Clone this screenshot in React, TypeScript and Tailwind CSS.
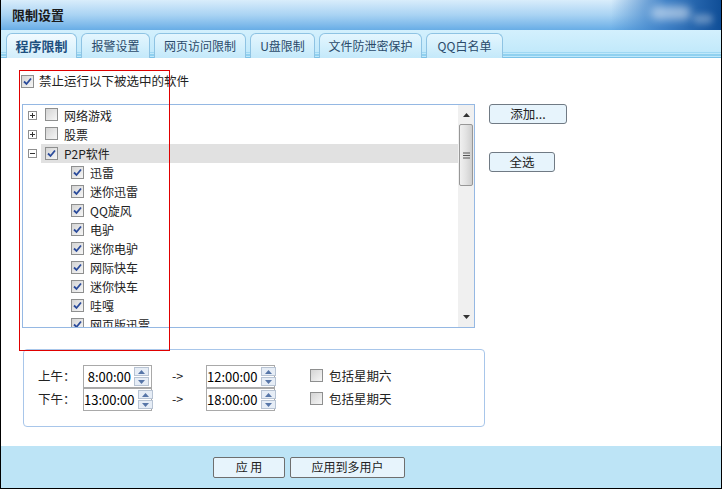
import React from 'react';

const font = { fontFamily: '"Microsoft YaHei", "Noto Sans CJK SC", "Liberation Sans", sans-serif' };

function Check({ checked = false }: { checked?: boolean }) {
  return (
    <span className="inline-flex h-[13px] w-[13px] shrink-0 items-center justify-center border border-[#8e8f8f] bg-gradient-to-br from-[#d4d4d4] to-[#f6f6f6]">
      {checked && (
        <svg width="9" height="9" viewBox="0 0 9 9">
          <path d="M1 4.5 L3.5 7 L8 1.5" fill="none" stroke="#2b4b9b" strokeWidth="1.8" />
        </svg>
      )}
    </span>
  );
}

function Expander({ open = false }: { open?: boolean }) {
  return (
    <span className="relative inline-block h-[9px] w-[9px] shrink-0 border border-[#8f8f8f] bg-white">
      <span className="absolute left-[1px] top-[3px] h-[1px] w-[5px] bg-[#333]" />
      {!open && <span className="absolute left-[3px] top-[1px] h-[5px] w-[1px] bg-[#333]" />}
    </span>
  );
}

function Spinner({ value }: { value: string }) {
  return (
    <div className="flex h-[23px] w-[69px] items-center border border-[#a9a9a9] bg-white">
      <span className="flex-1 pr-[3px] text-right text-[13px] text-black">{value}</span>
      <div className="mr-[2px] flex flex-col gap-[1px]">
        <span className="flex h-[9px] w-[15px] items-center justify-center border border-[#b7c3d3] bg-[#e6edf6]">
          <svg width="7" height="4" viewBox="0 0 7 4"><path d="M0 4 L3.5 0 L7 4Z" fill="#5776a8" /></svg>
        </span>
        <span className="flex h-[9px] w-[15px] items-center justify-center border border-[#b7c3d3] bg-[#e6edf6]">
          <svg width="7" height="4" viewBox="0 0 7 4"><path d="M0 0 L3.5 4 L7 0Z" fill="#5776a8" /></svg>
        </span>
      </div>
    </div>
  );
}

const tabs = ['程序限制', '报警设置', '网页访问限制', 'U盘限制', '文件防泄密保护', 'QQ白名单'];
const tabWidths = ['w-[71px]', 'w-[69px]', 'w-[92px]', 'w-[65px]', 'w-[103px]', 'w-[77px]'];

const children = ['迅雷', '迷你迅雷', 'QQ旋风', '电驴', '迷你电驴', '网际快车', '迷你快车', '哇嘎', '网页版迅雷'];

export default function App() {
  return (
    <div style={font} className="relative flex h-[489px] w-[722px] flex-col border-x border-b border-black bg-white text-[12px] text-[#222]">
      {/* title bar */}
      <div className="relative flex h-[30px] items-center overflow-hidden bg-gradient-to-b from-[#d9edfb] via-[#a9d3f3] to-[#68ade6] pl-[11px]">
        <span className="text-[13px] font-bold text-[#1a1a1a]">限制设置</span>
        <div className="absolute right-0 top-0 h-[30px] w-[110px] bg-gradient-to-r from-transparent via-[#3c7fc6] to-[#0f4e97]" />
        <div className="absolute right-[30px] top-[6px] h-[14px] w-[40px] rounded-full bg-white/50 blur-[4px]" />
        <div className="absolute right-[8px] top-[14px] h-[10px] w-[20px] rounded-full bg-white/30 blur-[3px]" />
      </div>

      {/* tabs strip */}
      <div className="relative flex h-[28px] items-end gap-[4px] bg-gradient-to-b from-[#d3f0fd] to-[#bde7fa] pl-[5px]">
        <div className="absolute bottom-[5px] left-0 right-0 h-[1px] bg-[#9fd8f3]" />
        <div className="absolute bottom-[2px] left-0 right-0 h-[2px] bg-[#90d1f0]" />
        <div className="absolute bottom-0 left-0 right-0 h-[1px] bg-[#7cc3e8]" />
        {tabs.map((t, i) => (
          <div
            key={t}
            className={`relative z-10 flex h-[25px] items-center justify-center rounded-t-[6px] border border-b-0 border-[#8ec3e3] ${tabWidths[i]} ${
              i === 0
                ? 'bg-gradient-to-b from-[#f2fbff] to-[#d2eefb] text-[13px] font-bold text-[#1d4f7f]'
                : 'bg-gradient-to-b from-[#e4f6fe] to-[#c4e9fa] text-[12px] text-[#2a4a6a]'
            }`}
          >
            {t}
          </div>
        ))}
      </div>

      {/* content */}
      <div className="relative flex flex-1 flex-col bg-white">
        <div className="flex h-[30px] items-end gap-[5px] pl-[20px]">
          <Check checked />
          <span className="leading-[14px] text-[12.5px]">禁止运行以下被选中的软件</span>
        </div>

        <div className="mt-[16px] flex gap-[14px] pl-[21px]">
          <div className="flex h-[224px] w-[453px] border border-[#95b8e3] bg-white">
            <div className="flex flex-1 flex-col overflow-hidden pt-[1px]">
              {['网络游戏', '股票'].map((g) => (
                <div key={g} className="flex h-[19px] shrink-0 items-center pl-[5px]">
                  <Expander />
                  <span className="ml-[8px]"><Check /></span>
                  <span className="ml-[6px]">{g}</span>
                </div>
              ))}
              <div className="flex h-[19px] shrink-0 items-center pl-[5px]">
                <Expander open />
                <div className="ml-[4px] flex h-[19px] flex-1 items-center bg-[#e1e1e1] pl-[4px]">
                  <Check checked />
                  <span className="ml-[6px]">P2P软件</span>
                </div>
              </div>
              {children.map((c) => (
                <div key={c} className="flex h-[19px] shrink-0 items-center pl-[48px]">
                  <Check checked />
                  <span className="ml-[6px]">{c}</span>
                </div>
              ))}
            </div>
            {/* scrollbar */}
            <div className="flex w-[16px] flex-col items-center bg-[#f0f0f0] py-[1px]">
              <div className="flex h-[18px] items-center justify-center">
                <svg width="7" height="4" viewBox="0 0 7 4"><path d="M0 4 L3.5 0 L7 4Z" fill="#333" /></svg>
              </div>
              <div className="flex h-[62px] w-[14px] items-center justify-center rounded-[2px] border border-[#979797] bg-gradient-to-r from-[#f0f0f0] via-[#e2e2e2] to-[#cfcfcf]">
                <svg width="7" height="7" viewBox="0 0 7 7">
                  <path d="M0 1h7M0 3.5h7M0 6h7" stroke="#555" strokeWidth="1" />
                </svg>
              </div>
              <div className="flex-1" />
              <div className="flex h-[18px] items-center justify-center">
                <svg width="7" height="4" viewBox="0 0 7 4"><path d="M0 0 L3.5 4 L7 0Z" fill="#333" /></svg>
              </div>
            </div>
          </div>

          <div className="flex flex-col">
            <button className="h-[20px] w-[78px] rounded-[3px] border border-[#707a84] bg-[#e7f4fc] text-[12.5px] leading-none text-[#222]">添加...</button>
            <button className="mt-[28px] h-[20px] w-[66px] rounded-[3px] border border-[#707a84] bg-[#e7f4fc] text-[12.5px] leading-none text-[#222]">全选</button>
          </div>
        </div>

        {/* time group */}
        <div className="ml-[22px] mt-[21px] flex h-[78px] w-[462px] flex-col justify-center rounded-[4px] border border-[#a8c6ea] pl-[14px]">
          {[
            ['上午：', '8:00:00', '12:00:00', '包括星期六'],
            ['下午：', '13:00:00', '18:00:00', '包括星期天'],
          ].map(([l, a, b, c]) => (
            <div key={l} className="flex h-[23px] items-center">
              <span className="w-[45px] text-[12.5px]">{l}</span>
              <Spinner value={a} />
              <span className="ml-[20px] w-[34px] text-[12.5px]">-&gt;</span>
              <Spinner value={b} />
              <span className="ml-[35px]"><Check /></span>
              <span className="ml-[6px] text-[12.5px]">{c}</span>
            </div>
          ))}
        </div>

        {/* red highlight overlay */}
        <div className="pointer-events-none absolute left-[18px] top-[12px] h-[281px] w-[151px] border border-[#e00000]" />
      </div>

      {/* footer */}
      <div className="flex h-[42px] items-center gap-[5px] bg-[#bde4f6] pl-[212px]">
        <button className="h-[21px] w-[72px] rounded-[2px] border border-[#6e6e6e] bg-[#e7f4fc] text-[12px] text-[#222]">应 用</button>
        <button className="h-[21px] w-[115px] rounded-[2px] border border-[#6e6e6e] bg-[#e7f4fc] text-[12px] text-[#222]">应用到多用户</button>
      </div>
    </div>
  );
}
